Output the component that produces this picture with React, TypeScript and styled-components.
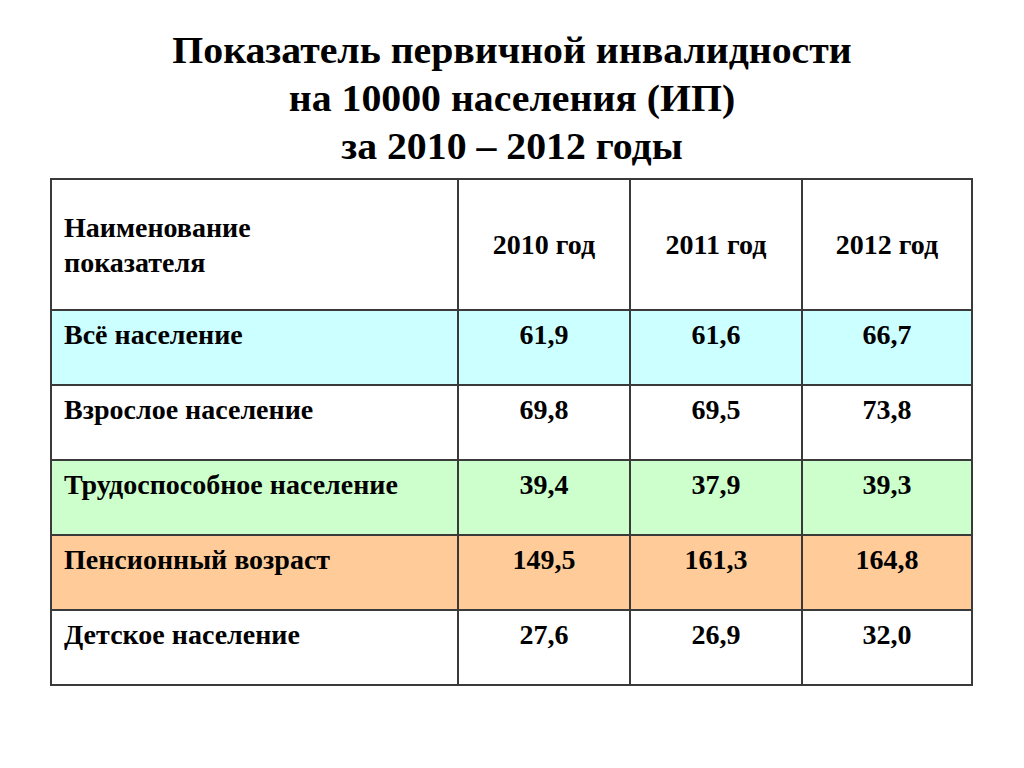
import React from "react";
import styled, { createGlobalStyle } from "styled-components";

const Global = createGlobalStyle`
  html, body { margin: 0; padding: 0; background: #ffffff; }
  body { font-family: "Liberation Serif", "Times New Roman", serif; color: #000; }
`;

const Page = styled.div`
  width: 1024px;
  height: 768px;
  box-sizing: border-box;
  padding-top: 27px;
  display: flex;
  flex-direction: column;
  align-items: center;
`;

const Title = styled.h1`
  margin: 0;
  font-size: 37px;
  line-height: 48px;
  font-weight: bold;
  text-align: center;
  transform: scaleX(1.075);
  white-space: nowrap;
`;

const TableWrap = styled.div`
  margin-top: 7px;
  align-self: flex-start;
  margin-left: 50px;
`;

const Table = styled.table`
  border-collapse: collapse;
  width: 921px;
  table-layout: fixed;
  font-size: 28px;
  font-weight: bold;
`;

const Row = styled.tr<{ $bg?: string }>`
  background: ${(p) => p.$bg ?? "#ffffff"};
  height: 75px;
`;

const HeadRow = styled.tr`
  height: 131px;
`;

const Cell = styled.td<{ $center?: boolean; $head?: boolean }>`
  border: 2px solid #3a3a3a;
  padding: ${(p) => (p.$head ? "0 12px" : "6px 12px 0")};
  vertical-align: ${(p) => (p.$head ? "middle" : "top")};
  text-align: ${(p) => (p.$center ? "center" : "left")};
  line-height: 35px;
  white-space: nowrap;
`;

const rows: { name: string; v: string[]; bg?: string }[] = [
  { name: "Всё население", v: ["61,9", "61,6", "66,7"], bg: "#ccffff" },
  { name: "Взрослое население", v: ["69,8", "69,5", "73,8"] },
  { name: "Трудоспособное население", v: ["39,4", "37,9", "39,3"], bg: "#ccffcc" },
  { name: "Пенсионный возраст", v: ["149,5", "161,3", "164,8"], bg: "#ffcc99" },
  { name: "Детское население", v: ["27,6", "26,9", "32,0"] },
];

export default function App() {
  return (
    <>
      <Global />
      <Page>
        <Title>
          Показатель первичной инвалидности
          <br />
          на 10000 населения (ИП)
          <br />
          за 2010 – 2012 годы
        </Title>
        <TableWrap>
          <Table>
            <colgroup>
              <col style={{ width: 407 }} />
              <col style={{ width: 172 }} />
              <col style={{ width: 172 }} />
              <col style={{ width: 170 }} />
            </colgroup>
            <tbody>
              <HeadRow>
                <Cell $head>
                  Наименование
                  <br />
                  показателя
                </Cell>
                <Cell $head $center>2010 год</Cell>
                <Cell $head $center>2011 год</Cell>
                <Cell $head $center>2012 год</Cell>
              </HeadRow>
              {rows.map((r) => (
                <Row key={r.name} $bg={r.bg}>
                  <Cell>{r.name}</Cell>
                  {r.v.map((x, i) => (
                    <Cell key={i} $center>
                      {x}
                    </Cell>
                  ))}
                </Row>
              ))}
            </tbody>
          </Table>
        </TableWrap>
      </Page>
    </>
  );
}
